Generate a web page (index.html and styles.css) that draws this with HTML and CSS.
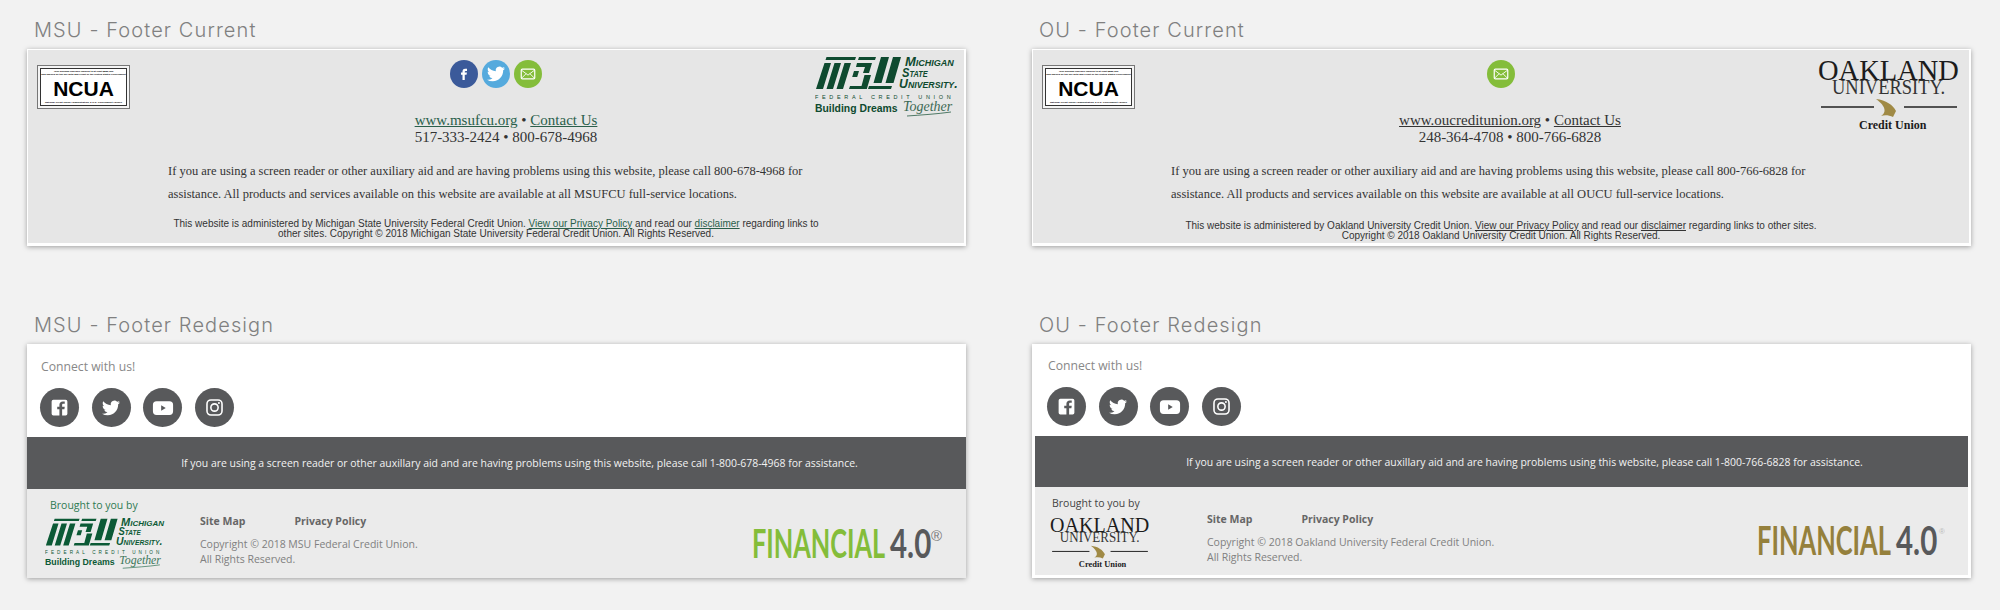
FILE: index.html
```html
<!DOCTYPE html>
<html lang="en">
<head>
    <meta charset="UTF-8">
    <meta name="viewport" content="width=device-width, initial-scale=1.0">
    <title>Footer Comparison</title>
    <link rel="stylesheet" href="styles.css">
</head>
<body>
    <svg class="sprite" aria-hidden="true">
        <symbol id="i-fb" viewBox="0 0 24 24"><path d="M5 3h14a2 2 0 0 1 2 2v14a2 2 0 0 1-2 2h-4v-7h2.600l.4-3h-3V9.200c0-.9.3-1.400 1.500-1.400H18V5.100c-.3 0-1.200-.1-2.300-.1-2.300 0-3.800 1.400-3.800 3.900V11H9.400v3h2.500v7H5a2 2 0 0 1-2-2V5a2 2 0 0 1 2-2z"/></symbol>
        <symbol id="i-tw" viewBox="0 0 24 24"><path d="M23.950 4.570a10 10 0 0 1-2.820.77 4.960 4.960 0 0 0 2.160-2.720c-.95.55-2 .96-3.120 1.190a4.920 4.920 0 0 0-8.390 4.480C7.690 8.100 4.070 6.130 1.640 3.160a4.820 4.820 0 0 0-.67 2.480c0 1.700.87 3.210 2.190 4.100a4.900 4.900 0 0 1-2.230-.61v.06a4.920 4.920 0 0 0 3.950 4.830 5 5 0 0 1-2.210.08 4.940 4.940 0 0 0 4.600 3.420A9.870 9.870 0 0 1 0 19.540a14 14 0 0 0 7.560 2.210c9.050 0 14-7.500 14-13.980 0-.21 0-.42-.02-.63a9.940 9.940 0 0 0 2.460-2.550l-.05-.02z"/></symbol>
        <symbol id="i-yt" viewBox="0 0 24 24"><path fill-rule="evenodd" d="M5 4.500h14a4 4 0 0 1 4 4v7a4 4 0 0 1-4 4H5a4 4 0 0 1-4-4v-7a4 4 0 0 1 4-4zM10 9v6l5-3z"/></symbol>
        <symbol id="i-ig" viewBox="0 0 24 24"><rect x="2.500" y="2.500" width="19" height="19" rx="5" fill="none" stroke="#fff" stroke-width="2"/><circle cx="12" cy="12" r="4.600" fill="none" stroke="#fff" stroke-width="2"/><circle cx="17.600" cy="6.400" r="1.300" fill="#fff"/></symbol>
        <symbol id="i-f" viewBox="0 0 24 24"><path d="M14.200 8H16V5h-2.400C11 5 10 6.600 10 8.600V10H8v3h2v7h3v-7h2.400l.5-3H13V8.900c0-.6.4-.9 1.200-.9z"/></symbol>
        <symbol id="i-mail" viewBox="0 0 24 24"><rect x="3" y="5.500" width="18" height="13" rx="1.500" fill="none" stroke="#fff" stroke-width="1.600"/><path d="M3.500 7l8.500 6.500L20.500 7M3.500 17.500L9.500 11.500M20.500 17.500L14.500 11.500" fill="none" stroke="#fff" stroke-width="1.200"/></symbol>
        <symbol id="msu-mark" viewBox="0 0 86 33">
            <path d="M10.500 0H40L39 3H9.500zM8.500 6h6.500L7 32H0zM18.500 6H25L17 32h-6.500zM28.500 6H35L27 32h-6.500zM43 0h17l-1 3H42zM41 6h15l-3 10h-6l2-6h-9zM55 18l-4.200 14H33l1-3h11.500l3-11zM38 14h5l-1.800 6h-5zM65 0h8L65.500 26H57.500zM77 0h8L77.500 26H69.500zM53 29h23l-1 3H52z"/>
        </symbol>
    </svg>

    <main class="board">
        <section class="block">
            <h2 class="block-title">MSU - Footer Current</h2>
            <div class="panel-current msu-current">
                <div class="current-top">
                    <div class="ncua">
                        <div class="ncua-inner">
                            <span class="ncua-fine">Your savings federally insured to at least $250,000<br>and backed by the full faith and credit of the United States Government</span>
                            <span class="ncua-name">NCUA</span>
                            <span class="ncua-fine">National Credit Union Administration, a U.S. Government Agency</span>
                        </div>
                    </div>
                    <div class="current-center">
                        <div class="share">
                            <span class="share-btn fb"><svg><use href="#i-f"/></svg></span>
                            <span class="share-btn tw"><svg><use href="#i-tw"/></svg></span>
                            <span class="share-btn mail"><svg><use href="#i-mail"/></svg></span>
                        </div>
                        <p class="address"><a href="#">www.msufcu.org</a> &bull; <a href="#">Contact Us</a><br>517-333-2424 &bull; 800-678-4968</p>
                    </div>
                    <svg class="logo-msu current-logo" viewBox="0 -4 142 66">
                        <use href="#msu-mark" x="1" y="0" width="86" height="33"/>
                        <text class="msu-name" transform="translate(90 9)">Michigan</text>
                        <text class="msu-name" transform="translate(87 20) scale(.86 1)">State</text>
                        <text class="msu-name" transform="translate(84 31) scale(.95 1)">University.</text>
                        <text class="msu-fed" x="0" y="42">FEDERAL CREDIT UNION</text>
                        <text class="msu-dreams" transform="translate(0 55) scale(.99 1)">Building Dreams</text>
                        <text class="msu-together" x="88" y="54">Together</text>
                        <path class="msu-swoosh" d="M92 59c14-1 30-2 44-4"/>
                    </svg>
                </div>
                <p class="notice">If you are using a screen reader or other auxiliary aid and are having problems using this website, please call 800-678-4968 for<br>assistance. All products and services available on this website are available at all MSUFCU full-service locations.</p>
                <p class="legal">This website is administered by Michigan State University Federal Credit Union. <a href="#">View our Privacy Policy</a> and read our <a href="#">disclaimer</a> regarding links to<br>other sites. Copyright &copy; 2018 Michigan State University Federal Credit Union. All Rights Reserved.</p>
            </div>
        </section>

        <section class="block">
            <h2 class="block-title">OU - Footer Current</h2>
            <div class="panel-current ou-current">
                <div class="current-top">
                    <div class="ncua">
                        <div class="ncua-inner">
                            <span class="ncua-fine">Your savings federally insured to at least $250,000<br>and backed by the full faith and credit of the United States Government</span>
                            <span class="ncua-name">NCUA</span>
                            <span class="ncua-fine">National Credit Union Administration, a U.S. Government Agency</span>
                        </div>
                    </div>
                    <div class="current-center">
                        <div class="share">
                            <span class="share-btn mail"><svg><use href="#i-mail"/></svg></span>
                        </div>
                        <p class="address"><a href="#">www.oucreditunion.org</a> &bull; <a href="#">Contact Us</a><br>248-364-4708 &bull; 800-766-6828</p>
                    </div>
                    <svg class="logo-ou current-logo" viewBox="0 -6 142 80">
                        <text class="ou-oakland" transform="translate(0 23) scale(.95 1)">OAKLAND</text>
                        <text class="ou-university" transform="translate(14 37) scale(.88 1)">UNIVERSITY.</text>
                        <path class="ou-rule" d="M3 50h53M86 50h53"/>
                        <path class="ou-wing" d="M58 42C68 43 75 48 78 54L75 60C71 58 66 58 63 59C68 56 69 50 58 42z"/>
                        <text class="ou-cu" x="41" y="72">Credit Union</text>
                    </svg>
                </div>
                <p class="notice">If you are using a screen reader or other auxiliary aid and are having problems using this website, please call 800-766-6828 for<br>assistance. All products and services available on this website are available at all OUCU full-service locations.</p>
                <p class="legal">This website is administered by Oakland University Credit Union. <a href="#">View our Privacy Policy</a> and read our <a href="#">disclaimer</a> regarding links to other sites.<br>Copyright &copy; 2018 Oakland University Credit Union. All Rights Reserved.</p>
            </div>
        </section>

        <section class="block">
            <h2 class="block-title">MSU - Footer Redesign</h2>
            <div class="panel-redesign msu-redesign">
                <div class="connect">
                    <p class="connect-label">Connect with us!</p>
                    <div class="social">
                        <span class="social-btn"><svg class="ic-fb"><use href="#i-fb"/></svg></span>
                        <span class="social-btn"><svg class="ic-tw"><use href="#i-tw"/></svg></span>
                        <span class="social-btn"><svg class="ic-yt"><use href="#i-yt"/></svg></span>
                        <span class="social-btn"><svg class="ic-ig"><use href="#i-ig"/></svg></span>
                    </div>
                </div>
                <div class="band">If you are using a screen reader or other auxillary aid and are having problems using this website, please call 1-800-678-4968 for assistance.</div>
                <div class="base">
                    <div class="sponsor">
                        <p class="sponsor-label">Brought to you by</p>
                        <svg class="logo-msu base-logo" viewBox="0 -4 142 66">
                            <use href="#msu-mark" x="1" y="0" width="86" height="33"/>
                            <text class="msu-name" transform="translate(90 9)">Michigan</text>
                            <text class="msu-name" transform="translate(87 20) scale(.86 1)">State</text>
                            <text class="msu-name" transform="translate(84 31) scale(.95 1)">University.</text>
                            <text class="msu-fed" x="0" y="42">FEDERAL CREDIT UNION</text>
                            <text class="msu-dreams" transform="translate(0 55) scale(.99 1)">Building Dreams</text>
                            <text class="msu-together" x="88" y="54">Together</text>
                            <path class="msu-swoosh" d="M92 59c14-1 30-2 44-4"/>
                        </svg>
                    </div>
                    <div class="site-info">
                        <nav class="site-nav"><a href="#">Site Map</a><a href="#">Privacy Policy</a></nav>
                        <p class="copyright">Copyright &copy; 2018 MSU Federal Credit Union.<br>All Rights Reserved.</p>
                    </div>
                    <svg class="fin-logo fin-green" viewBox="0 0 192 36">
                        <text class="fin-word" transform="translate(0 33) scale(.617 1)">FINANCIAL</text>
                        <text class="fin-num" transform="translate(138 33) scale(.72 1)">4.0</text>
                        <text class="fin-reg" x="179" y="16">&reg;</text>
                    </svg>
                </div>
            </div>
        </section>

        <section class="block">
            <h2 class="block-title">OU - Footer Redesign</h2>
            <div class="panel-redesign ou-redesign">
                <div class="connect">
                    <p class="connect-label">Connect with us!</p>
                    <div class="social">
                        <span class="social-btn"><svg class="ic-fb"><use href="#i-fb"/></svg></span>
                        <span class="social-btn"><svg class="ic-tw"><use href="#i-tw"/></svg></span>
                        <span class="social-btn"><svg class="ic-yt"><use href="#i-yt"/></svg></span>
                        <span class="social-btn"><svg class="ic-ig"><use href="#i-ig"/></svg></span>
                    </div>
                </div>
                <div class="band">If you are using a screen reader or other auxillary aid and are having problems using this website, please call 1-800-766-6828 for assistance.</div>
                <div class="base">
                    <div class="sponsor">
                        <p class="sponsor-label">Brought to you by</p>
                        <svg class="logo-ou base-logo" viewBox="0 -6 142 80">
                            <text class="ou-oakland" transform="translate(0 23) scale(.95 1)">OAKLAND</text>
                            <text class="ou-university" transform="translate(14 37) scale(.88 1)">UNIVERSITY.</text>
                            <path class="ou-rule" d="M3 50h53M86 50h53"/>
                            <path class="ou-wing" d="M58 42C68 43 75 48 78 54L75 60C71 58 66 58 63 59C68 56 69 50 58 42z"/>
                            <text class="ou-cu" x="41" y="72">Credit Union</text>
                        </svg>
                    </div>
                    <div class="site-info">
                        <nav class="site-nav"><a href="#">Site Map</a><a href="#">Privacy Policy</a></nav>
                        <p class="copyright">Copyright &copy; 2018 Oakland University Federal Credit Union.<br>All Rights Reserved.</p>
                    </div>
                    <svg class="fin-logo fin-gold" viewBox="0 0 188 36">
                        <text class="fin-word" transform="translate(0 33) scale(.62 1)">FINANCIAL</text>
                        <text class="fin-num" transform="translate(139 33) scale(.72 1)">4.0</text>
                        <text class="fin-reg" x="182" y="12">&reg;</text>
                    </svg>
                </div>
            </div>
        </section>
    </main>
</body>
</html>
```

FILE: styles.css
```css
body {
    margin: 0;
    width: 2000px;
    height: 610px;
    overflow: hidden;
    background-color: #f2f2f2;
    font-family: "Open Sans", sans-serif;
}
p, h2 {
    margin: 0;
}
.sprite {
    display: none;
}
.board {
    display: grid;
    grid-template-columns: 939px 939px;
    column-gap: 66px;
    row-gap: 63px;
    padding: 14px 0 0 27px;
}
.block-title {
    height: 35px;
    line-height: 33px;
    padding-left: 7px;
    font-family: Inter, sans-serif;
    font-size: 20px;
    font-weight: 300;
    letter-spacing: 1.1px;
    color: #808080;
}

/* current footers */
.panel-current {
    box-sizing: border-box;
    height: 197px;
    padding: 0 8px;
    background: #e6e6e6;
    border-style: solid;
    border-color: #fff;
    border-width: 1px 2px 3px 1px;
    box-shadow: 0 1px 5px rgba(0, 0, 0, 0.35);
    color: #333;
}
.current-top {
    display: grid;
    grid-template-columns: 1fr auto 1fr;
}
.ncua {
    box-sizing: border-box;
    width: 93px;
    height: 44px;
    margin: 15px 0 0 1px;
    padding: 2px;
    background: #f4f4f4;
    border: 1px solid #777;
}
.ncua-inner {
    display: flex;
    flex-direction: column;
    align-items: center;
    justify-content: space-between;
    height: 100%;
    box-sizing: border-box;
    padding: 1px 0;
    background: #fff;
    border: 1px solid #333;
    font-family: "Liberation Sans", sans-serif;
    color: #000;
}
.ncua-fine {
    font-size: 2.500px;
    line-height: 3px;
    font-weight: bold;
    text-align: center;
    white-space: nowrap;
}
.ncua-name {
    font-size: 21px;
    line-height: 19px;
    font-weight: bold;
}
.current-center {
    display: flex;
    flex-direction: column;
    align-items: center;
    width: 204px;
}
.share {
    display: flex;
    gap: 4px;
    margin-top: 10px;
}
.share-btn {
    display: flex;
    align-items: center;
    justify-content: center;
    width: 28px;
    height: 28px;
    border-radius: 50%;
}
.share-btn svg {
    width: 18px;
    height: 18px;
    fill: #fff;
}
.fb { background: #3b5a9a; }
.tw { background: #55aadd; }
.mail { background: #84bd3a; }
.address {
    margin-top: 24px;
    padding-left: 18px;
    font-family: "Liberation Serif", serif;
    font-size: 15px;
    line-height: 17px;
    text-align: center;
    white-space: nowrap;
}
.msu-current .address {
    padding-left: 20px;
}
.address a, .legal a {
    color: inherit;
}
.msu-current .address a, .msu-current .legal a {
    color: #2a5f4b;
}
.current-logo {
    justify-self: end;
    width: 142px;
    margin: 1px 1px 0 0;
}
.logo-msu.current-logo {
    margin: 3px -1px 0 0;
}
.notice {
    margin: 14px 0 0 130px;
    font-family: "Liberation Serif", serif;
    font-size: 12.500px;
    line-height: 23px;
    white-space: nowrap;
}
.msu-current .notice {
    margin-left: 132px;
}
.legal {
    margin-top: 13px;
    font-family: "Liberation Sans", sans-serif;
    font-size: 10px;
    line-height: 9.500px;
    text-align: center;
    white-space: nowrap;
}
.ou-current .legal {
    margin-top: 15px;
}

/* logos */
.logo-msu {
    fill: currentColor;
}
.logo-msu.current-logo {
    color: #0e4a2f;
}
.logo-msu.base-logo {
    color: #0c5a36;
}
.msu-name {
    font-family: "Liberation Sans", sans-serif;
    font-size: 13px;
    font-weight: bold;
    font-style: italic;
    font-variant: small-caps;
}
.msu-fed {
    font-family: "Liberation Sans", sans-serif;
    font-size: 5.500px;
    letter-spacing: 3.650px;
}
.msu-dreams {
    font-family: "Liberation Sans", sans-serif;
    font-size: 10.500px;
    font-weight: bold;
}
.msu-together {
    font-family: "Liberation Serif", serif;
    font-size: 14px;
    font-style: italic;
    opacity: 0.8;
}
.msu-swoosh {
    fill: none;
    stroke: currentColor;
    stroke-width: 0.700;
}
.ou-oakland, .ou-university, .ou-cu {
    font-family: "Liberation Serif", serif;
    fill: #1c1c1c;
}
.ou-oakland {
    font-size: 30px;
}
.ou-university {
    font-size: 21px;
    fill: #333;
}
.ou-cu {
    font-size: 12px;
    font-weight: bold;
}
.ou-rule {
    fill: none;
    stroke: #222;
    stroke-width: 1.400;
}
.ou-wing {
    fill: #a08a45;
}

/* redesigned footers */
.panel-redesign {
    height: 234px;
    display: flex;
    flex-direction: column;
    box-shadow: 0 1px 5px rgba(0, 0, 0, 0.35);
}
.ou-redesign {
    box-sizing: border-box;
    border: solid #fff;
    border-width: 0 3px 3px;
}
.connect {
    box-sizing: border-box;
    height: 93px;
    padding: 15px 0 0 13px;
    background: #fff;
}
.ou-redesign .connect {
    height: 92px;
    padding: 14px 0 0 12px;
}
.connect-label {
    padding-left: 1px;
    font-size: 12.200px;
    line-height: 16px;
    color: #888;
}
.social {
    display: flex;
    gap: 12.600px;
    margin-top: 13px;
}
.social-btn {
    display: flex;
    align-items: center;
    justify-content: center;
    width: 39px;
    height: 39px;
    border-radius: 50%;
    background: #58595b;
}
.social-btn svg {
    fill: #fff;
}
.ic-fb { width: 21px; height: 21px; }
.ic-tw { width: 18px; height: 18px; }
.ic-yt { width: 22px; height: 22px; }
.ic-ig { width: 19px; height: 19px; }
.band {
    display: flex;
    align-items: center;
    justify-content: center;
    height: 52px;
    padding-left: 46px;
    background: #58595b;
    color: #f2f2f2;
    font-size: 10.450px;
    white-space: nowrap;
}
.ou-redesign .band {
    height: 51px;
}
.base {
    flex: 1;
    display: flex;
    padding-left: 18px;
    padding-right: 22px;
    background: #ebebeb;
}
.ou-redesign .base {
    padding-left: 15px;
    padding-right: 23px;
}
.sponsor {
    width: 155px;
    flex: none;
}
.ou-redesign .sponsor {
    width: 157px;
}
.sponsor-label {
    margin-top: 9px;
    padding-left: 5px;
    font-size: 10.500px;
    line-height: 14px;
}
.msu-redesign .sponsor-label {
    color: #2f7a52;
}
.ou-redesign .sponsor-label {
    padding-left: 2px;
    color: #444;
}
.base-logo {
    display: block;
    margin-top: 3px;
}
.logo-msu.base-logo {
    width: 120px;
}
.logo-ou.base-logo {
    width: 100px;
    margin-top: 2px;
}
.site-nav {
    display: flex;
    gap: 49px;
    margin-top: 25px;
}
.site-nav a {
    font-size: 10.500px;
    line-height: 15px;
    font-weight: bold;
    color: #666;
    text-decoration: none;
}
.copyright {
    margin-top: 8px;
    font-size: 10.500px;
    line-height: 14.500px;
    color: #808080;
    white-space: nowrap;
}
.fin-logo {
    margin-left: auto;
    margin-top: 36px;
    height: 36px;
}
.fin-green {
    width: 192px;
}
.fin-gold {
    width: 188px;
    margin-top: 35px;
}
.fin-word, .fin-num {
    font-family: Lato, sans-serif;
    font-size: 41px;
    font-weight: bold;
}
.fin-green .fin-word {
    fill: #84bd3a;
}
.fin-gold .fin-word {
    fill: #95803c;
}
.fin-num {
    fill: #58595b;
}
.fin-reg {
    font-family: "Liberation Sans", sans-serif;
}
.fin-green .fin-reg {
    font-size: 15px;
    fill: #777;
}
.fin-gold .fin-reg {
    font-size: 8px;
    fill: #bbb;
}
```
